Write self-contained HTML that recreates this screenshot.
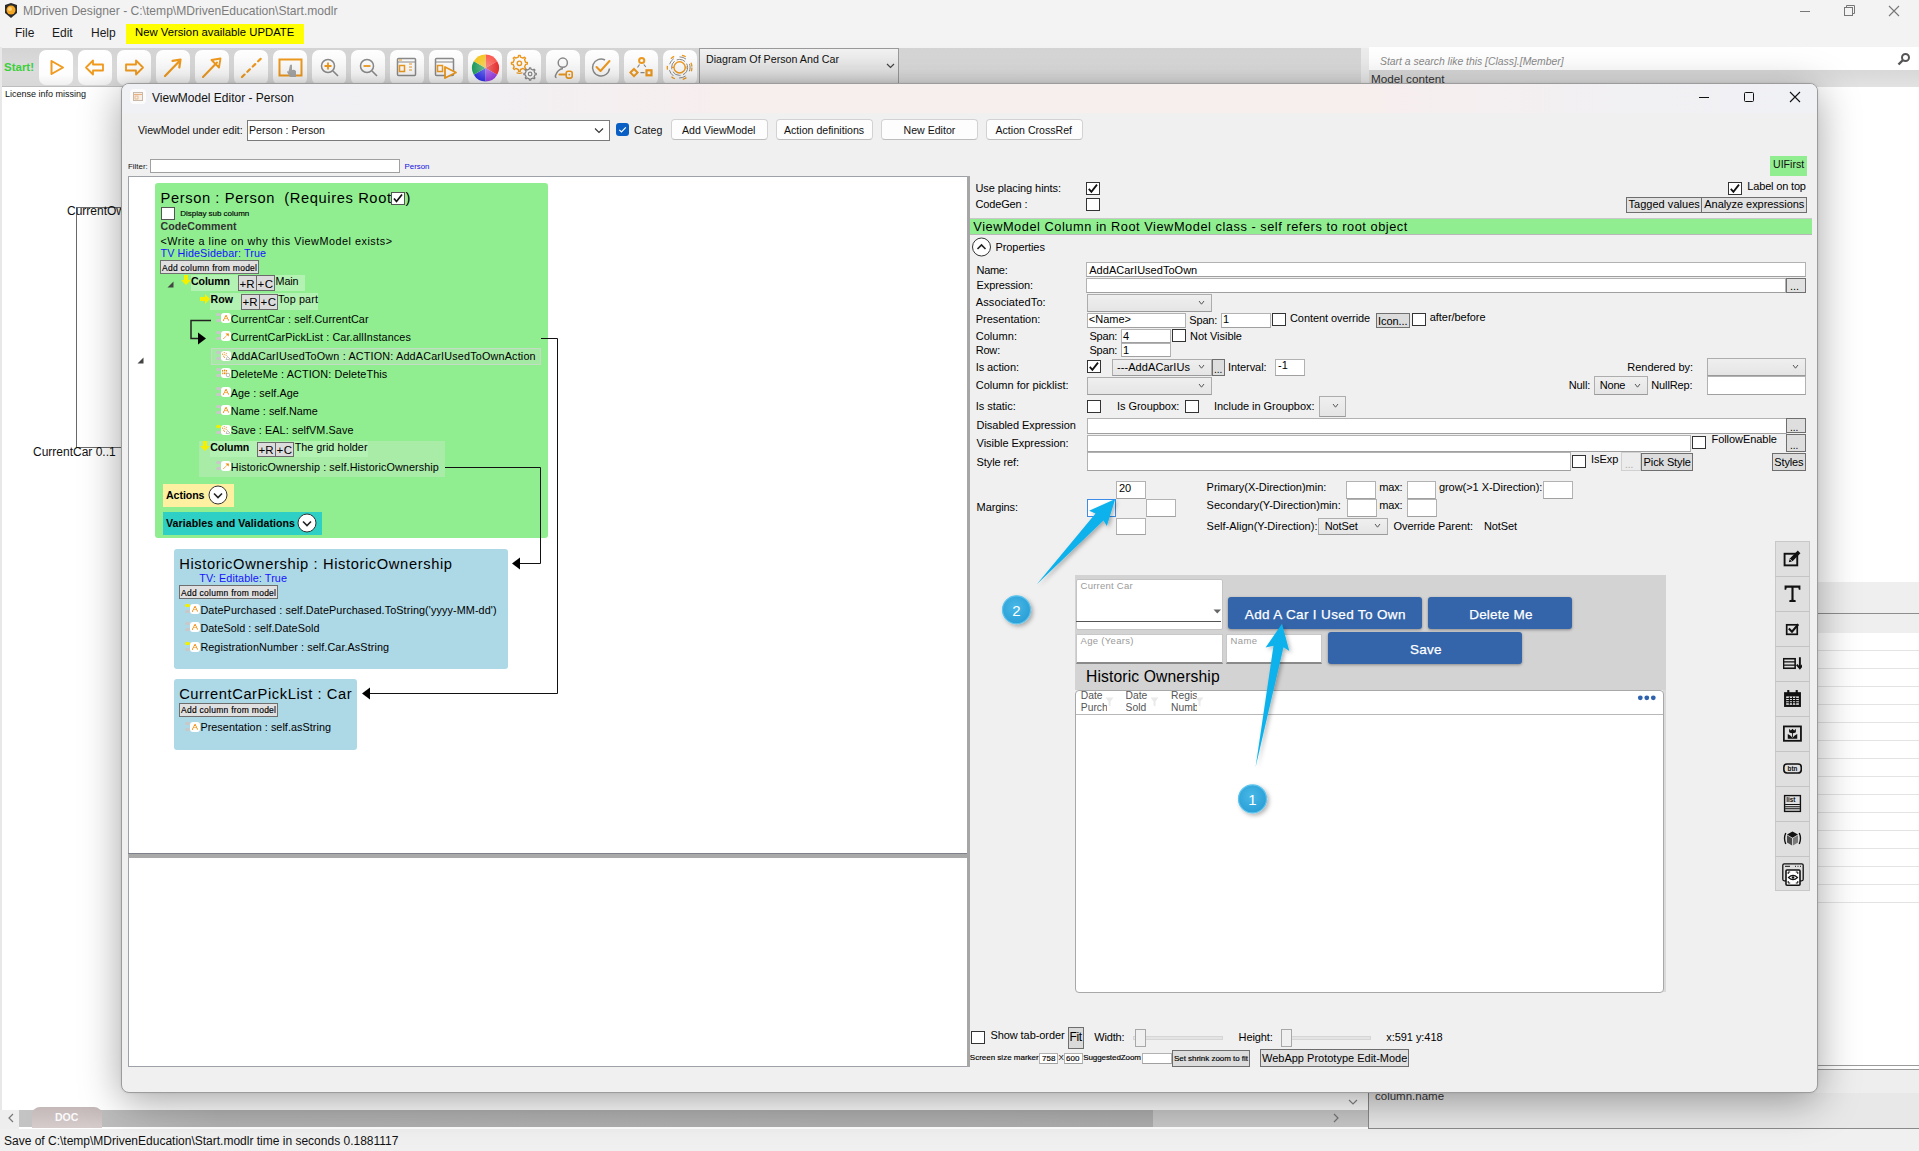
<!DOCTYPE html>
<html><head><meta charset="utf-8">
<style>
*{box-sizing:border-box;margin:0;padding:0}
html,body{width:1919px;height:1151px;overflow:hidden;background:#fff;font-family:"Liberation Sans",sans-serif;color:#000}
.a{position:absolute}
.t{position:absolute;white-space:pre;line-height:1}
.inp{position:absolute;background:#fff;border:1px solid #a9a9a9}
.btn{position:absolute;background:#e1e1e1;border:1px solid #7a7a7a}
.cb{position:absolute;width:13px;height:13px;background:#fff;border:1px solid #333}
</style></head><body>
<!-- title bar -->
<div class="a" style="left:0;top:0;width:1919px;height:48px;background:#f3f3f3"></div>
<svg class="a" style="left:3px;top:2px" width="16" height="17" viewBox="0 0 16 17"><path d="M2 3 L8 1 L14 3 L14 11 L8 16 L2 11 Z" fill="#2a2a2a"/><circle cx="8" cy="8" r="4.5" fill="#f5a623"/><circle cx="7" cy="7" r="2" fill="#ffd27a"/></svg>
<div class="t" style="left:23px;top:5px;font-size:12.1px;color:#7c7c7c">MDriven Designer - C:\temp\MDrivenEducation\Start.modlr</div>
<svg class="a" style="left:1799px;top:4px" width="110" height="14"><path d="M1 7.5h10" stroke="#777" stroke-width="1"/><rect x="45.5" y="3.5" width="8" height="8" fill="none" stroke="#777"/><path d="M47.5 3.5v-2h8v8h-2" fill="none" stroke="#777"/><path d="M90 2l10 10M100 2l-10 10" stroke="#777" stroke-width="1.1"/></svg>
<!-- menu -->
<div class="t" style="left:15px;top:27px;font-size:12px;color:#1a1a1a">File</div>
<div class="t" style="left:52px;top:27px;font-size:12px;color:#1a1a1a">Edit</div>
<div class="t" style="left:91px;top:27px;font-size:12px;color:#1a1a1a">Help</div>
<div class="a" style="left:126px;top:24px;width:178px;height:20px;background:#ffff00"></div>
<div class="t" style="left:135px;top:27px;font-size:11.3px">New Version available UPDATE</div>
<!-- toolbar -->
<div class="a" style="left:2px;top:48px;width:1359px;height:39px;background:linear-gradient(#d4d4d4,#dcdcdc 60%,#d8d8d8);border-bottom:1px solid #bdbdbd"></div>
<div class="t" style="left:4px;top:62px;font-size:11.5px;font-weight:bold;color:#3ccf3c">Start!</div>

<div class="a" style="left:39px;top:50px;width:34px;height:35px;border-radius:7px;background:linear-gradient(#ffffff,#fdfdfd 70%,#f0f0f0)"></div>
<svg class="a" style="left:39px;top:50px" width="34" height="35" viewBox="0 0 34 35"><path d="M12.5 11 L24 17.5 L12.5 24 Z" fill="none" stroke="#f09a1e" stroke-width="2" stroke-linejoin="round"/></svg>
<div class="a" style="left:78px;top:50px;width:34px;height:35px;border-radius:7px;background:linear-gradient(#ffffff,#fdfdfd 70%,#f0f0f0)"></div>
<svg class="a" style="left:78px;top:50px" width="34" height="35" viewBox="0 0 34 35"><path d="M8 17.5 L15 10.5 L15 14.5 L25 14.5 L25 20.5 L15 20.5 L15 24.5 Z" fill="none" stroke="#f09a1e" stroke-width="1.8" stroke-linejoin="round"/></svg>
<div class="a" style="left:117px;top:50px;width:34px;height:35px;border-radius:7px;background:linear-gradient(#ffffff,#fdfdfd 70%,#f0f0f0)"></div>
<svg class="a" style="left:117px;top:50px" width="34" height="35" viewBox="0 0 34 35"><path d="M26 17.5 L19 10.5 L19 14.5 L9 14.5 L9 20.5 L19 20.5 L19 24.5 Z" fill="none" stroke="#f09a1e" stroke-width="1.8" stroke-linejoin="round"/></svg>
<div class="a" style="left:156px;top:50px;width:34px;height:35px;border-radius:7px;background:linear-gradient(#ffffff,#fdfdfd 70%,#f0f0f0)"></div>
<svg class="a" style="left:156px;top:50px" width="34" height="35" viewBox="0 0 34 35"><path d="M9 26 L24 10.5 M16.5 10.8 L24.5 9.5 L23.3 17.5" fill="none" stroke="#f09a1e" stroke-width="2.2" stroke-linecap="round" stroke-linejoin="round"/></svg>
<div class="a" style="left:195px;top:50px;width:34px;height:35px;border-radius:7px;background:linear-gradient(#ffffff,#fdfdfd 70%,#f0f0f0)"></div>
<svg class="a" style="left:195px;top:50px" width="34" height="35" viewBox="0 0 34 35"><path d="M8 27 L22 12.5" stroke="#f09a1e" stroke-width="2" stroke-linecap="round"/><path d="M16.5 10 L25.5 8.5 L24 17.5 Z" fill="none" stroke="#f09a1e" stroke-width="1.8" stroke-linejoin="round"/></svg>
<div class="a" style="left:234px;top:50px;width:34px;height:35px;border-radius:7px;background:linear-gradient(#ffffff,#fdfdfd 70%,#f0f0f0)"></div>
<svg class="a" style="left:234px;top:50px" width="34" height="35" viewBox="0 0 34 35"><path d="M8 27 L27 8.5" stroke="#f09a1e" stroke-width="2.2" stroke-linecap="round" stroke-dasharray="3.5 4"/></svg>
<div class="a" style="left:273px;top:50px;width:34px;height:35px;border-radius:7px;background:linear-gradient(#ffffff,#fdfdfd 70%,#f0f0f0)"></div>
<svg class="a" style="left:273px;top:50px" width="34" height="35" viewBox="0 0 34 35"><rect x="6.5" y="9.5" width="22" height="16" fill="none" stroke="#f09a1e" stroke-width="2"/><path d="M17 15 q1.5 -1 2 0 v5 q2 -1 4 1 v6 h-6 l-3 -5 q0 -1 1.5 -0.5 z" fill="#a8a8a8"/></svg>
<div class="a" style="left:312px;top:50px;width:34px;height:35px;border-radius:7px;background:linear-gradient(#ffffff,#fdfdfd 70%,#f0f0f0)"></div>
<svg class="a" style="left:312px;top:50px" width="34" height="35" viewBox="0 0 34 35"><circle cx="16" cy="16" r="6.5" fill="none" stroke="#8c8c8c" stroke-width="1.5"/><path d="M21 21 L26 26" stroke="#8c8c8c" stroke-width="1.6"/><path d="M16 12.5v7M12.5 16h7" stroke="#f09a1e" stroke-width="1.8"/></svg>
<div class="a" style="left:351px;top:50px;width:34px;height:35px;border-radius:7px;background:linear-gradient(#ffffff,#fdfdfd 70%,#f0f0f0)"></div>
<svg class="a" style="left:351px;top:50px" width="34" height="35" viewBox="0 0 34 35"><circle cx="16" cy="16" r="6.5" fill="none" stroke="#8c8c8c" stroke-width="1.5"/><path d="M21 21 L26 26" stroke="#8c8c8c" stroke-width="1.6"/><path d="M12.5 16h7" stroke="#f09a1e" stroke-width="1.8"/></svg>
<div class="a" style="left:390px;top:50px;width:34px;height:35px;border-radius:7px;background:linear-gradient(#ffffff,#fdfdfd 70%,#f0f0f0)"></div>
<svg class="a" style="left:390px;top:50px" width="34" height="35" viewBox="0 0 34 35"><rect x="7.5" y="8.5" width="18" height="17" rx="1" fill="none" stroke="#8c8c8c" stroke-width="1.5"/><path d="M7.5 12h18" stroke="#8c8c8c" stroke-width="1"/><path d="M9 10h3" stroke="#f09a1e"/><rect x="9.5" y="15.5" width="5" height="6" fill="none" stroke="#f09a1e" stroke-width="1.5"/><path d="M19 14h3M19 17h3M19 20h3" stroke="#f09a1e"/></svg>
<div class="a" style="left:429px;top:50px;width:34px;height:35px;border-radius:7px;background:linear-gradient(#ffffff,#fdfdfd 70%,#f0f0f0)"></div>
<svg class="a" style="left:429px;top:50px" width="34" height="35" viewBox="0 0 34 35"><rect x="6.5" y="8.5" width="18" height="17" rx="1" fill="none" stroke="#8c8c8c" stroke-width="1.5"/><path d="M6.5 12h18" stroke="#8c8c8c" stroke-width="1"/><rect x="8.5" y="15.5" width="5" height="6" fill="none" stroke="#f09a1e" stroke-width="1.5"/><path d="M16 17 L27 22.5 L16 28 Z" fill="#fff" stroke="#f09a1e" stroke-width="1.8" stroke-linejoin="round"/></svg>
<div class="a" style="left:468px;top:50px;width:34px;height:35px;border-radius:7px;background:linear-gradient(#ffffff,#fdfdfd 70%,#f0f0f0)"></div>
<svg class="a" style="left:468px;top:50px" width="34" height="35" viewBox="0 0 34 35"><defs><radialGradient id="wg"><stop offset="0" stop-color="#fff" stop-opacity=".35"/><stop offset="1" stop-color="#fff" stop-opacity="0"/></radialGradient></defs>
<g transform="translate(17.5 18)">
<path d="M0 0 L0 -13.5 A13.5 13.5 0 0 1 11.7 -6.75 Z" fill="#ff5a50"/>
<path d="M0 0 L11.7 -6.75 A13.5 13.5 0 0 1 11.7 6.75 Z" fill="#f03030"/>
<path d="M0 0 L11.7 6.75 A13.5 13.5 0 0 1 0 13.5 Z" fill="#9a3ee8"/>
<path d="M0 0 L0 13.5 A13.5 13.5 0 0 1 -11.7 6.75 Z" fill="#3030f0"/>
<path d="M0 0 L-11.7 6.75 A13.5 13.5 0 0 1 -11.7 -6.75 Z" fill="#20a060"/>
<path d="M0 0 L-11.7 -6.75 A13.5 13.5 0 0 1 0 -13.5 Z" fill="#f8c820"/>
<circle r="13.5" fill="url(#wg)"/></g></svg>
<div class="a" style="left:507px;top:50px;width:34px;height:35px;border-radius:7px;background:linear-gradient(#ffffff,#fdfdfd 70%,#f0f0f0)"></div>
<svg class="a" style="left:507px;top:50px" width="34" height="35" viewBox="0 0 34 35"><path d="M18.60 12.19 L20.36 12.52 L20.36 14.08 L18.60 14.41 L17.57 16.90 L18.58 18.38 L17.48 19.48 L16.00 18.47 L13.51 19.50 L13.18 21.26 L11.62 21.26 L11.29 19.50 L8.80 18.47 L7.32 19.48 L6.22 18.38 L7.23 16.90 L6.20 14.41 L4.44 14.08 L4.44 12.52 L6.20 12.19 L7.23 9.70 L6.22 8.22 L7.32 7.12 L8.80 8.13 L11.29 7.10 L11.62 5.34 L13.18 5.34 L13.51 7.10 L16.00 8.13 L17.48 7.12 L18.58 8.22 L17.57 9.70Z" fill="none" stroke="#f09a1e" stroke-width="1.4" stroke-linejoin="round"/><circle cx="12.4" cy="13.3" r="2.2" fill="none" stroke="#f09a1e" stroke-width="1.4"/><path d="M9.5 22.8q3 1 6 0" stroke="#f09a1e" fill="none" stroke-width="1.2"/><path d="M27.92 23.14 L29.27 23.39 L29.27 24.61 L27.92 24.86 L27.12 26.80 L27.89 27.93 L27.03 28.79 L25.90 28.02 L23.96 28.82 L23.71 30.17 L22.49 30.17 L22.24 28.82 L20.30 28.02 L19.17 28.79 L18.31 27.93 L19.08 26.80 L18.28 24.86 L16.93 24.61 L16.93 23.39 L18.28 23.14 L19.08 21.20 L18.31 20.07 L19.17 19.21 L20.30 19.98 L22.24 19.18 L22.49 17.83 L23.71 17.83 L23.96 19.18 L25.90 19.98 L27.03 19.21 L27.89 20.07 L27.12 21.20Z" fill="#fff" stroke="#8c8c8c" stroke-width="1.3" stroke-linejoin="round"/><circle cx="23.1" cy="24" r="1.8" fill="none" stroke="#8c8c8c" stroke-width="1.2"/></svg>
<div class="a" style="left:546px;top:50px;width:34px;height:35px;border-radius:7px;background:linear-gradient(#ffffff,#fdfdfd 70%,#f0f0f0)"></div>
<svg class="a" style="left:546px;top:50px" width="34" height="35" viewBox="0 0 34 35"><circle cx="16.8" cy="12.7" r="4.6" fill="none" stroke="#8c8c8c" stroke-width="1.5"/><path d="M10.5 27.5 q-1.5 0 -1 -2 q2 -6 7.5 -7" fill="none" stroke="#8c8c8c" stroke-width="1.5"/><path d="M13.5 24.5h6.5" stroke="#f09a1e" stroke-width="2.2" stroke-linecap="round"/><rect x="20.2" y="21.3" width="6" height="6.8" rx="2" fill="none" stroke="#f09a1e" stroke-width="1.6"/><circle cx="23.3" cy="24.6" r=".9" fill="#f09a1e"/></svg>
<div class="a" style="left:585px;top:50px;width:34px;height:35px;border-radius:7px;background:linear-gradient(#ffffff,#fdfdfd 70%,#f0f0f0)"></div>
<svg class="a" style="left:585px;top:50px" width="34" height="35" viewBox="0 0 34 35"><path d="M24.5 18.5 A8.5 8.5 0 1 1 20 10" fill="none" stroke="#8c8c8c" stroke-width="1.5"/><path d="M11.5 17 L15.5 21 L24.5 11" fill="none" stroke="#f09a1e" stroke-width="2" stroke-linejoin="round" stroke-linecap="round"/></svg>
<div class="a" style="left:624px;top:50px;width:34px;height:35px;border-radius:7px;background:linear-gradient(#ffffff,#fdfdfd 70%,#f0f0f0)"></div>
<svg class="a" style="left:624px;top:50px" width="34" height="35" viewBox="0 0 34 35"><circle cx="17.7" cy="10.5" r="2.6" fill="none" stroke="#f09a1e" stroke-width="2"/><path d="M10 19L13.6 22.6L10 26.2L6.4 22.6Z" fill="none" stroke="#f09a1e" stroke-width="2"/><rect x="22.5" y="20.3" width="5" height="5" fill="none" stroke="#f09a1e" stroke-width="2.2"/><path d="M15.5 14.5l-2 3M19.8 14.5l2 2.5M16.5 22.7h4" stroke="#8c8c8c" stroke-width="1.2"/></svg>
<div class="a" style="left:663px;top:50px;width:34px;height:35px;border-radius:7px;background:linear-gradient(#ffffff,#fdfdfd 70%,#f0f0f0)"></div>
<svg class="a" style="left:663px;top:50px" width="34" height="35" viewBox="0 0 34 35"><circle cx="16.6" cy="17.4" r="5.6" fill="none" stroke="#f09a1e" stroke-width="1.4"/><circle cx="16.6" cy="17.4" r="8" fill="none" stroke="#8c8c8c" stroke-width="1" stroke-dasharray="9 2.5"/><circle cx="16.6" cy="17.4" r="10.5" fill="none" stroke="#8c8c8c" stroke-width="1" stroke-dasharray="7 6" stroke-dashoffset="3"/><circle cx="16.6" cy="17.4" r="12.3" fill="none" stroke="#f09a1e" stroke-width="1.3" stroke-dasharray="4 8"/><path d="M11 17.4h-2M23 16.2v2.5" stroke="#f09a1e" stroke-width="1.2"/></svg>
<!-- combo -->
<div class="a" style="left:699px;top:48px;width:200px;height:36px;border:1px solid #9a9a9a;background:linear-gradient(#f2f2f2,#e4e4e4 70%,#d4d4d4)"></div>
<div class="t" style="left:706px;top:54px;font-size:10.7px;color:#111">Diagram Of Person And Car</div>
<svg class="a" style="left:886px;top:63px" width="9" height="6"><path d="M1 1l3.5 3.5L8 1" fill="none" stroke="#444" stroke-width="1.2"/></svg>
<!-- right toolbar area -->
<div class="a" style="left:1361px;top:48px;width:8px;height:39px;background:#ececec"></div>
<div class="a" style="left:1369px;top:47px;width:550px;height:23px;background:#fff"></div>
<div class="t" style="left:1380px;top:57px;font-size:10.4px;font-style:italic;color:#8a8a8a">Start a search like this [Class].[Member]</div>
<svg class="a" style="left:1897px;top:52px" width="14" height="14"><circle cx="8.5" cy="5.5" r="3.5" fill="none" stroke="#555" stroke-width="2"/><path d="M6 8l-4.5 4.5" stroke="#555" stroke-width="2.4"/></svg>
<div class="a" style="left:1369px;top:70px;width:550px;height:17px;background:linear-gradient(#d8d8d8,#e2e2e2)"></div>
<div class="t" style="left:1371px;top:73px;font-size:11.7px;color:#333">Model content</div>
<!-- left canvas -->
<div class="a" style="left:2px;top:87px;width:1366px;height:1023px;background:#fff"></div>
<div class="a" style="left:0;top:47px;width:2px;height:1063px;background:#e8e8e8"></div>
<div class="t" style="left:5px;top:90px;font-size:9px;color:#111">License info missing</div>
<div class="a" style="left:76px;top:207px;width:60px;height:241px;border:1px solid #6a6a6a"></div>
<div class="t" style="left:67px;top:205px;font-size:12px;color:#111">CurrentOw</div>
<div class="t" style="left:33px;top:446px;font-size:12px;color:#111">CurrentCar 0..1</div>
<!-- right list area -->
<div class="a" style="left:1368px;top:87px;width:551px;height:1006px;background:#fff"></div>
<div class="a" style="left:1368px;top:582px;width:551px;height:31px;background:#efefef"></div>
<div class="a" style="left:1368px;top:613px;width:551px;height:1px;background:#8e8e8e"></div>
<div class="a" style="left:1368px;top:614px;width:551px;height:19px;background:#efefef"></div>
<div class="a" style="left:1368px;top:633px;width:551px;height:270px;background:linear-gradient(#fff 17px,#e4e4e4 17px);background-size:100% 18px"></div>
<div class="a" style="left:1368px;top:1065px;width:551px;height:1px;background:#9a9a9a"></div>
<div class="a" style="left:1368px;top:1069px;width:551px;height:1px;background:#9a9a9a"></div>
<div class="a" style="left:1368px;top:1070px;width:551px;height:59px;background:#eeeeee"></div>
<div class="a" style="left:1368px;top:1093px;width:551px;height:36px;border-left:1px solid #8a8a8a;border-bottom:1px solid #8a8a8a;background:#e8e8e8"></div>
<div class="t" style="left:1375px;top:1091px;font-size:11.5px;color:#333">column.name</div>
<!-- bottom tab bar -->

<div class="a" style="left:19px;top:1110px;width:1349px;height:17px;background:#c8c8c8"></div>
<div class="a" style="left:19px;top:1110px;width:1134px;height:17px;background:linear-gradient(90deg,#c4c4c4 0,#c0c0c0 60px,#b2b2b2 200px,#aeaeae 1134px)"></div>
<div class="a" style="left:0;top:1110px;width:19px;height:19px;background:#eeeeee"></div>
<svg class="a" style="left:7px;top:1113px" width="8" height="10"><path d="M6 1L2 5l4 4" fill="none" stroke="#777" stroke-width="1.2"/></svg>
<svg class="a" style="left:1332px;top:1113px" width="8" height="10"><path d="M2 1l4 4-4 4" fill="none" stroke="#777" stroke-width="1.2"/></svg>
<svg class="a" style="left:1348px;top:1098px" width="10" height="8"><path d="M1 2l4 4 4-4" fill="none" stroke="#888" stroke-width="1.2"/></svg>
<div class="a" style="left:32px;top:1107px;width:70px;height:21px;border-radius:8px 8px 0 0;background:linear-gradient(#c4b8b8,#d6cccc)"></div>
<div class="t" style="left:55px;top:1112px;font-size:10.5px;font-weight:bold;color:#fafafa">DOC</div>
<!-- status -->
<div class="a" style="left:0;top:1129px;width:1919px;height:22px;background:#f0f0f0"></div>
<div class="t" style="left:4px;top:1135px;font-size:12px;color:#111">Save of C:\temp\MDrivenEducation\Start.modlr time in seconds 0.1881117</div>

<!-- dialog -->
<div class="a" style="left:121px;top:83px;width:1697px;height:1010px;background:#f0f0f0;border:1px solid #9c9c9c;border-radius:8px;box-shadow:0 8px 40px rgba(0,0,0,.36),0 0 3px rgba(0,0,0,.08)"></div>
<div class="a" style="left:122px;top:84px;width:1695px;height:29px;border-radius:7px 7px 0 0;background:linear-gradient(90deg,#f0f1f5 0,#f1f0f3 350px,#f7eeee 600px,#f7eeee 1250px,#f1f0f3 1500px,#f0f1f5 1695px)"></div>
<div class="a" style="left:130px;top:89px;width:16px;height:15px;border-radius:4px;background:#fbfbfb"></div>
<svg class="a" style="left:133px;top:92px" width="10" height="9"><rect x=".5" y=".5" width="9" height="8" fill="#f6efe6" stroke="#c9b9a8"/><path d="M1 2.5h8" stroke="#e8b080"/><rect x="2" y="4" width="3" height="3" fill="none" stroke="#e8b080" stroke-width=".8"/></svg>
<div class="t" style="left:152px;top:92px;font-size:12px;color:#111">ViewModel Editor - Person</div>
<svg class="a" style="left:1697px;top:90px" width="110" height="14"><path d="M2 7.5h10" stroke="#111" stroke-width="1"/><rect x="47.5" y="2.5" width="9" height="9" rx="1" fill="none" stroke="#111"/><path d="M93 2l10 10M103 2l-10 10" stroke="#111" stroke-width="1.1"/></svg>
<!-- top controls -->
<div class="t" style="left:138px;top:124.5px;font-size:10.6px;color:#111">ViewModel under edit:</div>
<div class="a" style="left:247px;top:120px;width:363px;height:21px;background:#fff;border:1px solid #7a7a7a"></div>
<div class="t" style="left:249px;top:125px;font-size:10.6px;color:#111">Person : Person</div>
<svg class="a" style="left:594px;top:127px" width="10" height="7"><path d="M1 1.5l4 4 4-4" fill="none" stroke="#333" stroke-width="1.1"/></svg>
<div class="a" style="left:616px;top:123px;width:13px;height:13px;border-radius:3px;background:#0a5fc4"></div>
<svg class="a" style="left:616px;top:123px" width="13" height="13"><path d="M3.3 6.8l2.2 2.2 4.3-4.6" fill="none" stroke="#fff" stroke-width="1.2"/></svg>
<div class="t" style="left:634px;top:124.8px;font-size:10.6px;color:#111">Categ</div>
<div class="a" style="left:671px;top:119px;width:97px;height:21px;border-radius:4px;background:#fdfdfd;border:1px solid #d2d2d2;border-bottom-color:#bdbdbd"></div>
<div class="t" style="left:682px;top:124.6px;font-size:10.6px;color:#111">Add ViewModel</div>
<div class="a" style="left:776px;top:119px;width:97px;height:21px;border-radius:4px;background:#fdfdfd;border:1px solid #d2d2d2;border-bottom-color:#bdbdbd"></div>
<div class="t" style="left:784px;top:124.6px;font-size:10.6px;color:#111">Action definitions</div>
<div class="a" style="left:881px;top:119px;width:97px;height:21px;border-radius:4px;background:#fdfdfd;border:1px solid #d2d2d2;border-bottom-color:#bdbdbd"></div>
<div class="t" style="left:903.5px;top:124.6px;font-size:10.6px;color:#111">New Editor</div>
<div class="a" style="left:986px;top:119px;width:97px;height:21px;border-radius:4px;background:#fdfdfd;border:1px solid #d2d2d2;border-bottom-color:#bdbdbd"></div>
<div class="t" style="left:995.5px;top:124.6px;font-size:10.6px;color:#111">Action CrossRef</div>
<!-- filter -->
<div class="t" style="left:128px;top:162.5px;font-size:7.9px;color:#111">Filter:</div>
<div class="a" style="left:150px;top:159px;width:250px;height:14px;background:#fff;border:1px solid #a0a0a0"></div>
<div class="t" style="left:404.5px;top:162.5px;font-size:7.9px;color:#1010e0">Person</div>
<!-- tree panel frame -->
<div class="a" style="left:128px;top:176px;width:840px;height:678px;background:#fff;border:1px solid #9ea2a8;border-right:none;border-bottom:none"></div>
<div class="a" style="left:128px;top:853px;width:839px;height:1px;background:#7c8088"></div>
<div class="a" style="left:128px;top:854px;width:839px;height:4px;background:#a9a9a9"></div>
<div class="a" style="left:128px;top:858px;width:839px;height:209px;background:#fff;border-left:1px solid #9ea2a8;border-bottom:1px solid #9ea2a8"></div>
<div class="a" style="left:967px;top:176px;width:3px;height:891px;background:#a6a6a6"></div>
<!-- UIFirst -->
<div class="a" style="left:1770px;top:156px;width:37px;height:20px;background:#90ee90"></div>
<div class="t" style="left:1773px;top:159px;font-size:10.6px;color:#111">UIFirst</div>

<div class="a" style="left:155px;top:183px;width:393px;height:355px;background:#90ee90;border-radius:3px"></div>
<div class="t" style="left:160.5px;top:191px;font-size:14.7px;color:#000;letter-spacing:0.608px;">Person : Person  (Requires Root</div>
<div class="a" style="left:391px;top:192px;width:14px;height:13px;background:#fff;border:1px solid #555"></div>
<svg class="a" style="left:391px;top:192px" width="14" height="13"><path d="M3 6.5l2.5 3 5.5-7" fill="none" stroke="#111" stroke-width="1.7"/></svg>
<div class="t" style="left:405.5px;top:191px;font-size:14.7px;color:#000;">)</div>
<div class="a" style="left:161px;top:207px;width:14px;height:13px;background:#fff;border:1px solid #555"></div>
<div class="t" style="left:180.3px;top:210px;font-size:8px;color:#000;letter-spacing:-0.022px;-webkit-text-stroke:.15px #000;">Display sub column</div>
<div class="t" style="left:160.5px;top:221px;font-size:10.6px;font-weight:bold;color:#333;letter-spacing:0.066px;">CodeComment</div>
<div class="t" style="left:160.5px;top:236px;font-size:10.8px;color:#000;letter-spacing:0.520px;">&lt;Write a line on why this ViewModel exists&gt;</div>
<div class="t" style="left:160.5px;top:248px;font-size:10.8px;color:#1414ff;letter-spacing:0.088px;">TV HideSidebar: True</div>
<div class="a" style="left:160px;top:260px;width:99px;height:14px;background:#e0e0e0;border:1px solid #6e6e6e"></div>
<div class="t" style="left:162px;top:264px;font-size:8.5px;color:#000;letter-spacing:0.262px;-webkit-text-stroke:.15px #000;">Add column from model</div>
<svg class="a" style="left:167px;top:281px" width="7" height="7"><path d="M6.5 0.5V6.5H0.5Z" fill="#444"/></svg>
<svg class="a" style="left:137px;top:357px" width="7" height="7"><path d="M6.5 0.5V6.5H0.5Z" fill="#444"/></svg>
<div class="a" style="left:191px;top:275px;width:114px;height:16px;background:#b4f2b4"></div>
<svg class="a" style="left:181px;top:275px" width="10" height="10"><path d="M3 0h4v5h3l-5 5-5-5h3z" fill="#f5f000"/></svg>
<div class="t" style="left:191px;top:276px;font-size:10.6px;font-weight:bold;color:#000;letter-spacing:-0.087px;">Column</div>
<div class="a" style="left:238px;top:275px;width:19px;height:16px;background:#dcdcdc;border:1px solid #6a6a6a"></div>
<div class="a" style="left:256px;top:275px;width:19px;height:16px;background:#dcdcdc;border:1px solid #6a6a6a"></div>
<div class="t" style="left:239.5px;top:279px;font-size:11.5px;color:#000;letter-spacing:-0.031px;">+R</div>
<div class="t" style="left:257.5px;top:279px;font-size:11.5px;color:#000;letter-spacing:0.469px;">+C</div>
<div class="t" style="left:275.6px;top:276px;font-size:10.8px;color:#000;letter-spacing:-0.135px;">Main</div>
<div class="a" style="left:210px;top:293px;width:108px;height:17px;background:#b4f2b4"></div>
<svg class="a" style="left:200px;top:294px" width="10" height="10"><path d="M0 3h5V0l5 5-5 5V7H0z" fill="#f5f000"/></svg>
<div class="t" style="left:210.6px;top:294px;font-size:10.6px;font-weight:bold;color:#000;letter-spacing:0.062px;">Row</div>
<div class="a" style="left:241px;top:293.5px;width:19px;height:16px;background:#dcdcdc;border:1px solid #6a6a6a"></div>
<div class="a" style="left:259px;top:293.5px;width:19px;height:16px;background:#dcdcdc;border:1px solid #6a6a6a"></div>
<div class="t" style="left:242.5px;top:297px;font-size:11.5px;color:#000;letter-spacing:-0.031px;">+R</div>
<div class="t" style="left:260.5px;top:297px;font-size:11.5px;color:#000;letter-spacing:0.469px;">+C</div>
<div class="t" style="left:278px;top:294px;font-size:10.8px;color:#000;letter-spacing:0.141px;">Top part</div>
<div class="a" style="left:211px;top:348px;width:330px;height:17px;background:#a4eaa4;border:1px solid #c4dcc4"></div>
<div class="a" style="left:216px;top:312.9px;width:5px;height:3px;border-radius:2px;background:#c8c8c8"></div>
<div class="a" style="left:216px;top:318.9px;width:5px;height:3px;border-radius:2px;background:#c8c8c8"></div>
<div class="a" style="left:221px;top:312.9px;width:10px;height:10px;border-radius:3px;background:#fff"></div>
<svg class="a" style="left:221px;top:312.9px" width="10" height="10"><path d="M2.3 7.7L5 2.2L7.7 7.7" fill="none" stroke="#f08a00" stroke-width="1.05" stroke-dasharray="1.6 .5"/><path d="M4.3 5.6h1.4" stroke="#f08a00" stroke-width=".8"/></svg>
<div class="t" style="left:230.8px;top:314px;font-size:10.8px;color:#000;letter-spacing:0.079px;">CurrentCar : self.CurrentCar</div>
<div class="a" style="left:216px;top:331.0px;width:5px;height:3px;border-radius:2px;background:#c8c8c8"></div>
<div class="a" style="left:216px;top:337.0px;width:5px;height:3px;border-radius:2px;background:#c8c8c8"></div>
<div class="a" style="left:221px;top:331.0px;width:10px;height:10px;border-radius:3px;background:#fff"></div>
<svg class="a" style="left:221px;top:331.0px" width="10" height="10"><path d="M2.2 8L6.5 3.7" stroke="#f08a00" stroke-width=".9" stroke-dasharray="1.2 .5"/><path d="M4.5 2.6L7.9 2.4L7.6 5.6Z" fill="#f08a00"/></svg>
<div class="t" style="left:230.8px;top:332px;font-size:10.8px;color:#000;letter-spacing:0.099px;">CurrentCarPickList : Car.allInstances</div>
<div class="a" style="left:216px;top:350.6px;width:5px;height:3px;border-radius:2px;background:#c8c8c8"></div>
<div class="a" style="left:216px;top:356.6px;width:5px;height:3px;border-radius:2px;background:#c8c8c8"></div>
<div class="a" style="left:221px;top:350.6px;width:10px;height:10px;border-radius:3px;background:#fff"></div>
<svg class="a" style="left:221px;top:350.6px" width="10" height="10"><g fill="#f08a00"><circle cx="3.2" cy="1.6" r=".55"/><circle cx="5.3" cy="2.2" r=".55"/><circle cx="1.6" cy="3.2" r=".6"/><circle cx="3.8" cy="3.5" r=".5"/><circle cx="5.2" cy="4.2" r=".55"/><circle cx="2.8" cy="5.2" r=".6"/><circle cx="3.4" cy="6.6" r=".5"/></g><path d="M5 8.5l1.5-3 2.5 2.5-2 .5z" fill="none" stroke="#999" stroke-width=".6"/></svg>
<div class="t" style="left:230.8px;top:351px;font-size:10.8px;color:#000;letter-spacing:0.179px;">AddACarIUsedToOwn : ACTION: AddACarIUsedToOwnAction</div>
<div class="a" style="left:216px;top:368.4px;width:5px;height:3px;border-radius:2px;background:#c8c8c8"></div>
<div class="a" style="left:216px;top:374.4px;width:5px;height:3px;border-radius:2px;background:#c8c8c8"></div>
<div class="a" style="left:221px;top:368.4px;width:10px;height:10px;border-radius:3px;background:#fff"></div>
<svg class="a" style="left:221px;top:368.4px" width="10" height="10"><g fill="#f08a00"><rect x="1" y="2" width="1.2" height="1.6"/><rect x="3" y="1.6" width="1.2" height="1.8"/><rect x="4.8" y="2" width="1.2" height="1.6"/><rect x="1.2" y="4.6" width="1.2" height="1.6"/><rect x="3" y="4.4" width="1.2" height="1.8"/><rect x="4.6" y="4.6" width="1.2" height="1.4"/></g><circle cx="7" cy="7" r="1.8" fill="none" stroke="#999" stroke-width=".7"/></svg>
<div class="t" style="left:230.8px;top:369px;font-size:10.8px;color:#000;letter-spacing:0.121px;">DeleteMe : ACTION: DeleteThis</div>
<div class="a" style="left:216px;top:387.4px;width:5px;height:3px;border-radius:2px;background:#c8c8c8"></div>
<div class="a" style="left:216px;top:393.4px;width:5px;height:3px;border-radius:2px;background:#c8c8c8"></div>
<div class="a" style="left:221px;top:387.4px;width:10px;height:10px;border-radius:3px;background:#fff"></div>
<svg class="a" style="left:221px;top:387.4px" width="10" height="10"><path d="M2.3 7.7L5 2.2L7.7 7.7" fill="none" stroke="#f08a00" stroke-width="1.05" stroke-dasharray="1.6 .5"/><path d="M4.3 5.6h1.4" stroke="#f08a00" stroke-width=".8"/></svg>
<div class="t" style="left:230.8px;top:388px;font-size:10.8px;color:#000;letter-spacing:0.059px;">Age : self.Age</div>
<div class="a" style="left:216px;top:405.4px;width:5px;height:3px;border-radius:2px;background:#c8c8c8"></div>
<div class="a" style="left:216px;top:411.4px;width:5px;height:3px;border-radius:2px;background:#c8c8c8"></div>
<div class="a" style="left:221px;top:405.4px;width:10px;height:10px;border-radius:3px;background:#fff"></div>
<svg class="a" style="left:221px;top:405.4px" width="10" height="10"><path d="M2.3 7.7L5 2.2L7.7 7.7" fill="none" stroke="#f08a00" stroke-width="1.05" stroke-dasharray="1.6 .5"/><path d="M4.3 5.6h1.4" stroke="#f08a00" stroke-width=".8"/></svg>
<div class="t" style="left:230.8px;top:406px;font-size:10.8px;color:#000;letter-spacing:0.040px;">Name : self.Name</div>
<div class="a" style="left:216px;top:424.5px;width:5px;height:3px;border-radius:2px;background:#f0f000"></div>
<div class="a" style="left:216px;top:430.5px;width:5px;height:3px;border-radius:2px;background:#c8c8c8"></div>
<div class="a" style="left:221px;top:424.5px;width:10px;height:10px;border-radius:3px;background:#fff"></div>
<svg class="a" style="left:221px;top:424.5px" width="10" height="10"><g fill="#f08a00"><circle cx="3.2" cy="1.6" r=".55"/><circle cx="5.3" cy="2.2" r=".55"/><circle cx="1.6" cy="3.2" r=".6"/><circle cx="3.8" cy="3.5" r=".5"/><circle cx="5.2" cy="4.2" r=".55"/><circle cx="2.8" cy="5.2" r=".6"/><circle cx="3.4" cy="6.6" r=".5"/></g><path d="M5 8.5l1.5-3 2.5 2.5-2 .5z" fill="none" stroke="#999" stroke-width=".6"/></svg>
<div class="t" style="left:230.8px;top:425px;font-size:10.8px;color:#000;letter-spacing:0.090px;">Save : EAL: selfVM.Save</div>
<div class="a" style="left:199px;top:441px;width:246px;height:36px;background:#a8eca8"></div>
<div class="a" style="left:210px;top:441px;width:158px;height:16px;background:#b4f2b4"></div>
<svg class="a" style="left:200px;top:441px" width="10" height="10"><path d="M3 0h4v5h3l-5 5-5-5h3z" fill="#f5f000"/></svg>
<div class="t" style="left:210.2px;top:442px;font-size:10.6px;font-weight:bold;color:#000;letter-spacing:-0.087px;">Column</div>
<div class="a" style="left:257px;top:441.5px;width:19px;height:15px;background:#dcdcdc;border:1px solid #6a6a6a"></div>
<div class="a" style="left:275px;top:441.5px;width:19px;height:15px;background:#dcdcdc;border:1px solid #6a6a6a"></div>
<div class="t" style="left:258.5px;top:445px;font-size:11.5px;color:#000;letter-spacing:-0.031px;">+R</div>
<div class="t" style="left:276.5px;top:445px;font-size:11.5px;color:#000;letter-spacing:0.469px;">+C</div>
<div class="t" style="left:294.7px;top:442px;font-size:10.8px;color:#000;letter-spacing:0.012px;">The grid holder</div>
<div class="a" style="left:216px;top:461px;width:5px;height:3px;border-radius:2px;background:#c8c8c8"></div>
<div class="a" style="left:216px;top:467px;width:5px;height:3px;border-radius:2px;background:#c8c8c8"></div>
<div class="a" style="left:221px;top:461px;width:10px;height:10px;border-radius:3px;background:#fff"></div>
<svg class="a" style="left:221px;top:461px" width="10" height="10"><path d="M2.2 8L6.5 3.7" stroke="#f08a00" stroke-width=".9" stroke-dasharray="1.2 .5"/><path d="M4.5 2.6L7.9 2.4L7.6 5.6Z" fill="#f08a00"/></svg>
<div class="t" style="left:230.8px;top:462px;font-size:10.8px;color:#000;letter-spacing:0.098px;">HistoricOwnership : self.HistoricOwnership</div>
<div class="a" style="left:163px;top:484px;width:71px;height:23px;background:#fdf0a0"></div>
<div class="t" style="left:166px;top:490px;font-size:10.6px;font-weight:bold;color:#000;letter-spacing:-0.060px;">Actions</div>
<svg class="a" style="left:208px;top:485px" width="20" height="20"><circle cx="10" cy="10" r="9" fill="#fff" stroke="#333" stroke-width="1"/><path d="M6 8.5l4 4 4-4" fill="none" stroke="#222" stroke-width="1.6"/></svg>
<div class="a" style="left:163px;top:512px;width:159px;height:23px;background:#2ecfc4"></div>
<div class="t" style="left:166px;top:518px;font-size:10.6px;font-weight:bold;color:#000;letter-spacing:0.076px;">Variables and Validations</div>
<svg class="a" style="left:297px;top:513px" width="20" height="20"><circle cx="10" cy="10" r="9" fill="#fff" stroke="#333" stroke-width="1"/><path d="M6 8.5l4 4 4-4" fill="none" stroke="#222" stroke-width="1.6"/></svg>
<div class="a" style="left:174px;top:549px;width:334px;height:120px;background:#add8e6;border-radius:3px"></div>
<div class="t" style="left:179.2px;top:557px;font-size:14.7px;color:#000;letter-spacing:0.617px;">HistoricOwnership : HistoricOwnership</div>
<div class="t" style="left:199.2px;top:573px;font-size:10.8px;color:#1414ff;letter-spacing:0.104px;">TV: Editable: True</div>
<div class="a" style="left:179px;top:585px;width:99px;height:14px;background:#e0e0e0;border:1px solid #6e6e6e"></div>
<div class="t" style="left:181px;top:589px;font-size:8.5px;color:#000;letter-spacing:0.262px;-webkit-text-stroke:.15px #000;">Add column from model</div>
<div class="a" style="left:185px;top:604.4px;width:5px;height:3px;border-radius:2px;background:#f0f000"></div>
<div class="a" style="left:185px;top:610.4px;width:5px;height:3px;border-radius:2px;background:#c8c8c8"></div>
<div class="a" style="left:190px;top:604.4px;width:10px;height:10px;border-radius:3px;background:#fff"></div>
<svg class="a" style="left:190px;top:604.4px" width="10" height="10"><path d="M2.3 7.7L5 2.2L7.7 7.7" fill="none" stroke="#f08a00" stroke-width="1.05" stroke-dasharray="1.6 .5"/><path d="M4.3 5.6h1.4" stroke="#f08a00" stroke-width=".8"/></svg>
<div class="t" style="left:200.4px;top:605px;font-size:10.8px;color:#000;letter-spacing:0.104px;">DatePurchased : self.DatePurchased.ToString('yyyy-MM-dd')</div>
<div class="a" style="left:185px;top:622.4px;width:5px;height:3px;border-radius:2px;background:#c8c8c8"></div>
<div class="a" style="left:185px;top:628.4px;width:5px;height:3px;border-radius:2px;background:#c8c8c8"></div>
<div class="a" style="left:190px;top:622.4px;width:10px;height:10px;border-radius:3px;background:#fff"></div>
<svg class="a" style="left:190px;top:622.4px" width="10" height="10"><path d="M2.3 7.7L5 2.2L7.7 7.7" fill="none" stroke="#f08a00" stroke-width="1.05" stroke-dasharray="1.6 .5"/><path d="M4.3 5.6h1.4" stroke="#f08a00" stroke-width=".8"/></svg>
<div class="t" style="left:200.4px;top:623px;font-size:10.8px;color:#000;letter-spacing:0.063px;">DateSold : self.DateSold</div>
<div class="a" style="left:185px;top:641.6px;width:5px;height:3px;border-radius:2px;background:#f0f000"></div>
<div class="a" style="left:185px;top:647.6px;width:5px;height:3px;border-radius:2px;background:#c8c8c8"></div>
<div class="a" style="left:190px;top:641.6px;width:10px;height:10px;border-radius:3px;background:#fff"></div>
<svg class="a" style="left:190px;top:641.6px" width="10" height="10"><path d="M2.3 7.7L5 2.2L7.7 7.7" fill="none" stroke="#f08a00" stroke-width="1.05" stroke-dasharray="1.6 .5"/><path d="M4.3 5.6h1.4" stroke="#f08a00" stroke-width=".8"/></svg>
<div class="t" style="left:200.4px;top:642px;font-size:10.8px;color:#000;letter-spacing:0.086px;">RegistrationNumber : self.Car.AsString</div>
<div class="a" style="left:174px;top:679px;width:183px;height:71px;background:#add8e6;border-radius:3px"></div>
<div class="t" style="left:179.2px;top:687px;font-size:14.7px;color:#000;letter-spacing:0.576px;">CurrentCarPickList : Car</div>
<div class="a" style="left:179px;top:702.5px;width:99px;height:14px;background:#e0e0e0;border:1px solid #6e6e6e"></div>
<div class="t" style="left:181px;top:706px;font-size:8.5px;color:#000;letter-spacing:0.262px;-webkit-text-stroke:.15px #000;">Add column from model</div>
<div class="a" style="left:185px;top:722px;width:5px;height:3px;border-radius:2px;background:#c8c8c8"></div>
<div class="a" style="left:185px;top:728px;width:5px;height:3px;border-radius:2px;background:#c8c8c8"></div>
<div class="a" style="left:190px;top:722px;width:10px;height:10px;border-radius:3px;background:#fff"></div>
<svg class="a" style="left:190px;top:722px" width="10" height="10"><path d="M2.3 7.7L5 2.2L7.7 7.7" fill="none" stroke="#f08a00" stroke-width="1.05" stroke-dasharray="1.6 .5"/><path d="M4.3 5.6h1.4" stroke="#f08a00" stroke-width=".8"/></svg>
<div class="t" style="left:200.4px;top:722px;font-size:10.8px;color:#000;letter-spacing:0.058px;">Presentation : self.asString</div>
<svg class="a" style="left:180px;top:310px" width="400" height="400">
<path d="M31 10.5H11V28.5H20" fill="none" stroke="#222" stroke-width="1.5"/>
<path d="M18 22.5L26 28.5L18 34.5Z" fill="#000"/>
<path d="M361 28.5H377.5V383.5H190" fill="none" stroke="#111" stroke-width="1"/>
<path d="M190 377.5L182 383.5L190 389.5Z" fill="#000"/>
<path d="M265 157.5H360.5V253.5H340" fill="none" stroke="#111" stroke-width="1"/>
<path d="M340 247.5L332 253.5L340 259.5Z" fill="#000"/>
</svg>
<div class="t" style="left:975.5px;top:183px;font-size:11px;color:#000;letter-spacing:-0.078px;">Use placing hints:</div>
<div class="a" style="left:1086px;top:182px;width:14px;height:13px;background:#fff;border:1px solid #333"></div>
<div class="a" style="left:1086px;top:182px;width:14px;height:13px;background:#fff;border:1px solid #333"></div>
<svg class="a" style="left:1086px;top:182px" width="14" height="14"><path d="M2.8 6.8l2.6 3 5.6-7.2" fill="none" stroke="#111" stroke-width="1.8"/></svg>
<div class="t" style="left:975.5px;top:199px;font-size:11px;color:#000;letter-spacing:-0.150px;">CodeGen :</div>
<div class="a" style="left:1086px;top:198px;width:14px;height:13px;background:#fff;border:1px solid #333"></div>
<div class="a" style="left:1728px;top:182px;width:14px;height:13px;background:#fff;border:1px solid #333"></div>
<svg class="a" style="left:1728px;top:182px" width="14" height="14"><path d="M2.8 6.8l2.6 3 5.6-7.2" fill="none" stroke="#111" stroke-width="1.8"/></svg>
<div class="t" style="left:1747.3px;top:181px;font-size:11px;color:#000;letter-spacing:-0.169px;">Label on top</div>
<div class="a" style="left:1626px;top:196.5px;width:76px;height:16.0px;background:#e1e1e1;border:1px solid #6e6e6e"></div>
<div class="a" style="left:1701px;top:196.5px;width:106px;height:16.0px;background:#e1e1e1;border:1px solid #6e6e6e"></div>
<div class="t" style="left:1628.5px;top:199px;font-size:11px;color:#000;letter-spacing:0.029px;">Tagged values</div>
<div class="t" style="left:1704.3px;top:199px;font-size:11px;color:#000;letter-spacing:-0.049px;">Analyze expressions</div>
<div class="a" style="left:970px;top:218px;width:842px;height:17px;background:#90ee90;border-top:1px solid #c8c8c8;border-bottom:1px solid #b8b8b8"></div>
<div class="t" style="left:973.3px;top:221px;font-size:12.8px;color:#000;letter-spacing:0.532px;">ViewModel Column in Root ViewModel class - self refers to root object</div>
<svg class="a" style="left:971px;top:237px" width="21" height="20"><circle cx="10.5" cy="10" r="9" fill="#fff" stroke="#333" stroke-width="1"/><path d="M6.5 12l4-4 4 4" fill="none" stroke="#222" stroke-width="1.6"/></svg>
<div class="t" style="left:995.5px;top:242px;font-size:11px;color:#000;letter-spacing:-0.082px;">Properties</div>
<div class="t" style="left:976.5px;top:265px;font-size:11px;color:#000;letter-spacing:-0.289px;">Name:</div>
<div class="a" style="left:1086px;top:262px;width:720px;height:15px;background:#fff;border:1px solid #b2b2b2;border-bottom-color:#a0a0a0;"></div>
<div class="t" style="left:1089.25px;top:265px;font-size:11px;color:#000;letter-spacing:0.024px;">AddACarIUsedToOwn</div>
<div class="t" style="left:976.5px;top:280px;font-size:11px;color:#000;letter-spacing:-0.098px;">Expression:</div>
<div class="a" style="left:1086px;top:277.5px;width:700px;height:15.5px;background:#fff;border:1px solid #b2b2b2;border-bottom-color:#a0a0a0;"></div>
<div class="a" style="left:1786px;top:277.5px;width:20px;height:15.5px;background:#e1e1e1;border:1px solid #707070"></div>
<div class="t" style="left:1790px;top:281px;font-size:11px;color:#000;">...</div>
<div class="t" style="left:975.7px;top:297px;font-size:11px;color:#000;letter-spacing:0.126px;">AssociatedTo:</div>
<div class="a" style="left:1086.5px;top:293.5px;width:125.5px;height:18.0px;background:linear-gradient(#efefef,#e5e5e5);border:1px solid #adadad;border-bottom-color:#9a9a9a"></div>
<svg class="a" style="left:1197px;top:299.5px" width="9" height="6"><path d="M2 1l2.5 3.2 2.5-3.2" fill="none" stroke="#555" stroke-width="1"/></svg>
<div class="t" style="left:975.7px;top:314px;font-size:11px;color:#000;letter-spacing:-0.011px;">Presentation:</div>
<div class="a" style="left:1086.5px;top:312.5px;width:99.0px;height:15.0px;background:#fff;border:1px solid #b2b2b2;border-bottom-color:#a0a0a0;"></div>
<div class="t" style="left:1088.8px;top:314px;font-size:11px;color:#000;">&lt;Name&gt;</div>
<div class="t" style="left:1189.3px;top:315px;font-size:11px;color:#000;letter-spacing:-0.188px;">Span:</div>
<div class="a" style="left:1221px;top:312.5px;width:49.5px;height:15.0px;background:#fff;border:1px solid #b2b2b2;border-bottom-color:#a0a0a0;"></div>
<div class="t" style="left:1223px;top:314px;font-size:11px;color:#000;">1</div>
<div class="a" style="left:1272px;top:313px;width:14px;height:13px;background:#fff;border:1px solid #333"></div>
<div class="t" style="left:1290px;top:313px;font-size:11px;color:#000;letter-spacing:-0.075px;">Content override</div>
<div class="a" style="left:1376px;top:313px;width:34px;height:14.5px;background:#dcdcdc;border:1px solid #707070"></div>
<div class="t" style="left:1378px;top:316px;font-size:11px;color:#000;letter-spacing:-0.078px;">Icon...</div>
<div class="a" style="left:1411.5px;top:313px;width:14px;height:13px;background:#fff;border:1px solid #333"></div>
<div class="t" style="left:1429.8px;top:312px;font-size:11px;color:#000;letter-spacing:-0.051px;">after/before</div>
<div class="t" style="left:975.7px;top:331px;font-size:11px;color:#000;letter-spacing:0.055px;">Column:</div>
<div class="t" style="left:1089.4px;top:331px;font-size:11px;color:#000;letter-spacing:-0.188px;">Span:</div>
<div class="a" style="left:1121px;top:328.5px;width:49.5px;height:14.0px;background:#fff;border:1px solid #b2b2b2;border-bottom-color:#a0a0a0;"></div>
<div class="t" style="left:1123px;top:331px;font-size:11px;color:#000;">4</div>
<div class="a" style="left:1172px;top:329px;width:14px;height:13px;background:#fff;border:1px solid #333"></div>
<div class="t" style="left:1190px;top:331px;font-size:11px;color:#000;letter-spacing:-0.039px;">Not Visible</div>
<div class="t" style="left:975.7px;top:345px;font-size:11px;color:#000;letter-spacing:-0.188px;">Row:</div>
<div class="t" style="left:1089.4px;top:345px;font-size:11px;color:#000;letter-spacing:-0.188px;">Span:</div>
<div class="a" style="left:1121px;top:342.5px;width:49.5px;height:14.5px;background:#fff;border:1px solid #b2b2b2;border-bottom-color:#a0a0a0;"></div>
<div class="t" style="left:1123px;top:345px;font-size:11px;color:#000;">1</div>
<div class="t" style="left:975.7px;top:362px;font-size:11px;color:#000;letter-spacing:-0.081px;">Is action:</div>
<div class="a" style="left:1087px;top:359.5px;width:14px;height:13px;background:#fff;border:1px solid #333"></div>
<svg class="a" style="left:1087px;top:359.5px" width="14" height="14"><path d="M2.8 6.8l2.6 3 5.6-7.2" fill="none" stroke="#111" stroke-width="1.8"/></svg>
<div class="a" style="left:1112px;top:358.5px;width:100px;height:17.5px;background:linear-gradient(#efefef,#e5e5e5);border:1px solid #adadad;border-bottom-color:#9a9a9a"></div>
<svg class="a" style="left:1197px;top:364.25px" width="9" height="6"><path d="M2 1l2.5 3.2 2.5-3.2" fill="none" stroke="#555" stroke-width="1"/></svg>
<div class="t" style="left:1117px;top:362px;font-size:11px;color:#000;letter-spacing:0.073px;">---AddACarIUs</div>
<div class="a" style="left:1211.5px;top:358.5px;width:13.0px;height:17.5px;background:#dedede;border:1px solid #6e6e6e"></div>
<div class="t" style="left:1214px;top:365px;font-size:10px;color:#000;">...</div>
<div class="t" style="left:1228px;top:362px;font-size:11px;color:#000;letter-spacing:-0.068px;">Interval:</div>
<div class="a" style="left:1275px;top:358.5px;width:30px;height:17.0px;background:#fff;border:1px solid #b2b2b2;border-bottom-color:#a0a0a0;"></div>
<div class="t" style="left:1278px;top:360px;font-size:11px;color:#000;">-1</div>
<div class="t" style="left:1627.3px;top:362px;font-size:11px;color:#000;letter-spacing:-0.032px;">Rendered by:</div>
<div class="a" style="left:1706.5px;top:358px;width:99.5px;height:18px;background:linear-gradient(#efefef,#e5e5e5);border:1px solid #adadad;border-bottom-color:#9a9a9a"></div>
<svg class="a" style="left:1791px;top:364.0px" width="9" height="6"><path d="M2 1l2.5 3.2 2.5-3.2" fill="none" stroke="#555" stroke-width="1"/></svg>
<div class="t" style="left:975.7px;top:380px;font-size:11px;color:#000;">Column for picklist:</div>
<div class="a" style="left:1086.5px;top:376.5px;width:125.5px;height:18.0px;background:linear-gradient(#efefef,#e5e5e5);border:1px solid #adadad;border-bottom-color:#9a9a9a"></div>
<svg class="a" style="left:1197px;top:382.5px" width="9" height="6"><path d="M2 1l2.5 3.2 2.5-3.2" fill="none" stroke="#555" stroke-width="1"/></svg>
<div class="t" style="left:1568.8px;top:380px;font-size:11px;color:#000;letter-spacing:-0.129px;">Null:</div>
<div class="a" style="left:1594px;top:376px;width:54px;height:19px;background:linear-gradient(#efefef,#e5e5e5);border:1px solid #adadad;border-bottom-color:#9a9a9a"></div>
<svg class="a" style="left:1633px;top:382.5px" width="9" height="6"><path d="M2 1l2.5 3.2 2.5-3.2" fill="none" stroke="#555" stroke-width="1"/></svg>
<div class="t" style="left:1599.7px;top:380px;font-size:11px;color:#000;letter-spacing:-0.166px;">None</div>
<div class="t" style="left:1651.3px;top:380px;font-size:11px;color:#000;letter-spacing:-0.127px;">NullRep:</div>
<div class="a" style="left:1706.5px;top:376px;width:99.5px;height:19px;background:#fff;border:1px solid #b2b2b2;border-bottom-color:#a0a0a0;"></div>
<div class="t" style="left:975.7px;top:401px;font-size:11px;color:#000;letter-spacing:-0.038px;">Is static:</div>
<div class="a" style="left:1087px;top:399.5px;width:14px;height:13px;background:#fff;border:1px solid #333"></div>
<div class="t" style="left:1117px;top:401px;font-size:11px;color:#000;letter-spacing:-0.053px;">Is Groupbox:</div>
<div class="a" style="left:1184.5px;top:399.5px;width:14px;height:13px;background:#fff;border:1px solid #333"></div>
<div class="t" style="left:1214px;top:401px;font-size:11px;color:#000;letter-spacing:-0.053px;">Include in Groupbox:</div>
<div class="a" style="left:1318.5px;top:395.5px;width:27.0px;height:21.5px;background:linear-gradient(#efefef,#e5e5e5);border:1px solid #adadad;border-bottom-color:#9a9a9a"></div>
<svg class="a" style="left:1330.5px;top:403.25px" width="9" height="6"><path d="M2 1l2.5 3.2 2.5-3.2" fill="none" stroke="#555" stroke-width="1"/></svg>
<div class="t" style="left:976.6px;top:420px;font-size:11px;color:#000;letter-spacing:-0.055px;">Disabled Expression</div>
<div class="a" style="left:1086.5px;top:417.5px;width:700.0px;height:16.0px;background:#fff;border:1px solid #b2b2b2;border-bottom-color:#a0a0a0;"></div>
<div class="a" style="left:1786px;top:417.5px;width:20px;height:15.5px;background:#dedede;border:1px solid #6e6e6e"></div>
<div class="t" style="left:1790px;top:423px;font-size:10px;color:#000;">...</div>
<div class="t" style="left:976.6px;top:438px;font-size:11px;color:#000;letter-spacing:-0.041px;">Visible Expression:</div>
<div class="a" style="left:1086.5px;top:434.5px;width:604.0px;height:17.5px;background:#fff;border:1px solid #b2b2b2;border-bottom-color:#a0a0a0;"></div>
<div class="a" style="left:1692px;top:436px;width:14px;height:13px;background:#fff;border:1px solid #333"></div>
<div class="t" style="left:1711.5px;top:434px;font-size:11px;color:#000;letter-spacing:-0.059px;">FollowEnable</div>
<div class="a" style="left:1786px;top:433.5px;width:20px;height:18.0px;background:#dedede;border:1px solid #6e6e6e"></div>
<div class="t" style="left:1790px;top:441px;font-size:10px;color:#000;">...</div>
<div class="t" style="left:976.6px;top:457px;font-size:11px;color:#000;letter-spacing:-0.112px;">Style ref:</div>
<div class="a" style="left:1086.5px;top:452px;width:484.5px;height:18.5px;background:#fff;border:1px solid #b2b2b2;border-bottom-color:#a0a0a0;"></div>
<div class="a" style="left:1572px;top:455px;width:14px;height:13px;background:#fff;border:1px solid #333"></div>
<div class="t" style="left:1591.1px;top:454px;font-size:11px;color:#000;letter-spacing:-0.079px;">IsExp</div>
<div class="a" style="left:1621px;top:452px;width:20px;height:18.5px;background:#ececec;border:1px solid #d0d0d0"></div>
<div class="t" style="left:1625px;top:460px;font-size:10px;color:#aaa;">...</div>
<div class="a" style="left:1641px;top:452.5px;width:52px;height:18.5px;background:#dcdcdc;border:1px solid #6e6e6e"></div>
<div class="t" style="left:1643.6px;top:457px;font-size:11px;color:#000;letter-spacing:-0.111px;">Pick Style</div>
<div class="a" style="left:1772px;top:452.5px;width:34px;height:18.5px;background:#dcdcdc;border:1px solid #6e6e6e"></div>
<div class="t" style="left:1774.3px;top:457px;font-size:11px;color:#000;letter-spacing:-0.154px;">Styles</div>
<div class="a" style="left:1116px;top:481px;width:29.5px;height:17.5px;background:#fff;border:1px solid #b2b2b2;border-bottom-color:#a0a0a0;"></div>
<div class="t" style="left:1119px;top:483px;font-size:11px;color:#000;">20</div>
<div class="t" style="left:976.6px;top:502px;font-size:11px;color:#000;letter-spacing:-0.113px;">Margins:</div>
<div class="a" style="left:1086.5px;top:499px;width:29.5px;height:18px;background:#fff;border:1px solid #b2b2b2;border-bottom-color:#a0a0a0;border-color:#3c8ce8"></div>
<div class="a" style="left:1146px;top:499px;width:29.5px;height:18px;background:#fff;border:1px solid #b2b2b2;border-bottom-color:#a0a0a0;"></div>
<div class="a" style="left:1116px;top:517.5px;width:29.5px;height:17.0px;background:#fff;border:1px solid #b2b2b2;border-bottom-color:#a0a0a0;"></div>
<div class="t" style="left:1206.6px;top:482px;font-size:11px;color:#000;letter-spacing:-0.031px;">Primary(X-Direction)min:</div>
<div class="a" style="left:1346px;top:481px;width:29.5px;height:17.5px;background:#fff;border:1px solid #b2b2b2;border-bottom-color:#a0a0a0;"></div>
<div class="t" style="left:1379.3px;top:482px;font-size:11px;color:#000;letter-spacing:-0.215px;">max:</div>
<div class="a" style="left:1406.5px;top:481px;width:29.5px;height:17.5px;background:#fff;border:1px solid #b2b2b2;border-bottom-color:#a0a0a0;"></div>
<div class="t" style="left:1438.9px;top:482px;font-size:11px;color:#000;letter-spacing:-0.037px;">grow(&gt;1 X-Direction):</div>
<div class="a" style="left:1543px;top:481px;width:29.5px;height:17.5px;background:#fff;border:1px solid #b2b2b2;border-bottom-color:#a0a0a0;"></div>
<div class="t" style="left:1206.6px;top:500px;font-size:11px;color:#000;">Secondary(Y-Direction)min:</div>
<div class="a" style="left:1347px;top:499px;width:29.5px;height:18px;background:#fff;border:1px solid #b2b2b2;border-bottom-color:#a0a0a0;"></div>
<div class="t" style="left:1379.3px;top:500px;font-size:11px;color:#000;letter-spacing:-0.215px;">max:</div>
<div class="a" style="left:1407px;top:499px;width:29.5px;height:18px;background:#fff;border:1px solid #b2b2b2;border-bottom-color:#a0a0a0;"></div>
<div class="t" style="left:1206.6px;top:521px;font-size:11px;color:#000;">Self-Align(Y-Direction):</div>
<div class="a" style="left:1318px;top:517.5px;width:70px;height:17.5px;background:linear-gradient(#efefef,#e5e5e5);border:1px solid #adadad;border-bottom-color:#9a9a9a"></div>
<svg class="a" style="left:1373px;top:523.25px" width="9" height="6"><path d="M2 1l2.5 3.2 2.5-3.2" fill="none" stroke="#555" stroke-width="1"/></svg>
<div class="t" style="left:1324.7px;top:521px;font-size:11px;color:#000;letter-spacing:-0.108px;">NotSet</div>
<div class="t" style="left:1393.5px;top:521px;font-size:11px;color:#000;letter-spacing:-0.080px;">Override Parent:</div>
<div class="t" style="left:1483.9px;top:521px;font-size:11px;color:#000;letter-spacing:-0.108px;">NotSet</div>
<div class="a" style="left:1075px;top:575px;width:591px;height:115px;background:#d3d3d3"></div>
<div class="a" style="left:1663px;top:690px;width:3px;height:302px;background:#dadada"></div>
<div class="a" style="left:1075.5px;top:578.5px;width:147px;height:51px;background:#fff;border:1px solid #c4c4c4;border-radius:2px"></div>
<div class="a" style="left:1076px;top:620.5px;width:145px;height:1.5px;background:#555"></div>
<div class="t" style="left:1080.6px;top:581px;font-size:9.5px;color:#9a9a9a;letter-spacing:0.237px;">Current Car</div>
<svg class="a" style="left:1213px;top:609px" width="9" height="6"><path d="M0.5 0.5h7.5l-3.75 4z" fill="#666"/></svg>
<div class="a" style="left:1228px;top:597px;width:194px;height:32px;background:#3465aa;border-radius:3px;box-shadow:0 1px 3px rgba(0,0,0,.35)"></div>
<div class="t" style="left:1244.8px;top:608px;font-size:13.5px;color:#fff;letter-spacing:0.353px;-webkit-text-stroke:.25px #fff;">Add A Car I Used To Own</div>
<div class="a" style="left:1428px;top:597px;width:144px;height:32px;background:#3465aa;border-radius:3px;box-shadow:0 1px 3px rgba(0,0,0,.35)"></div>
<div class="t" style="left:1469.2px;top:608px;font-size:13.5px;color:#fff;letter-spacing:0.209px;-webkit-text-stroke:.25px #fff;">Delete Me</div>
<div class="a" style="left:1075.5px;top:633.5px;width:147px;height:30.5px;background:#fff;border:1px solid #c8c8c8;border-bottom:2px solid #8a8a8a"></div>
<div class="t" style="left:1080.6px;top:636px;font-size:9.5px;color:#9a9a9a;letter-spacing:0.297px;">Age (Years)</div>
<div class="a" style="left:1225.5px;top:633.5px;width:96.5px;height:30.5px;background:#fff;border:1px solid #c8c8c8;border-bottom:2px solid #8a8a8a"></div>
<div class="t" style="left:1230.6px;top:636px;font-size:9.5px;color:#9a9a9a;letter-spacing:0.352px;">Name</div>
<div class="a" style="left:1328px;top:632px;width:194px;height:32px;background:#3465aa;border-radius:3px;box-shadow:0 1px 3px rgba(0,0,0,.35)"></div>
<div class="t" style="left:1410px;top:643px;font-size:13.5px;color:#fff;letter-spacing:0.273px;-webkit-text-stroke:.25px #fff;">Save</div>
<div class="t" style="left:1086px;top:669px;font-size:15.7px;color:#000;letter-spacing:0.121px;">Historic Ownership</div>
<div class="a" style="left:1075px;top:689.5px;width:589px;height:303px;background:#fff;border:1px solid #a8a8a8;border-radius:4px"></div>
<div class="a" style="left:1076px;top:714px;width:587px;height:1px;background:#b8b8b8"></div>
<div class="a" style="left:1080.8px;top:690px;width:26px;height:24px;overflow:hidden">
<div class="t" style="left:0;top:0.68px;font-size:10.3px;color:#555">Date</div>
<div class="t" style="left:0;top:12.88px;font-size:10.3px;color:#555">Purch</div>
</div>
<svg class="a" style="left:1104.8px;top:697px" width="9" height="10"><path d="M0.5 0.5h8l-3 4v5l-2-1v-4z" fill="#eaeaea"/></svg>
<div class="a" style="left:1125.6px;top:690px;width:30px;height:24px;overflow:hidden">
<div class="t" style="left:0;top:0.68px;font-size:10.3px;color:#555">Date</div>
<div class="t" style="left:0;top:12.88px;font-size:10.3px;color:#555">Sold</div>
</div>
<svg class="a" style="left:1149.6px;top:697px" width="9" height="10"><path d="M0.5 0.5h8l-3 4v5l-2-1v-4z" fill="#eaeaea"/></svg>
<div class="a" style="left:1171px;top:690px;width:26px;height:24px;overflow:hidden">
<div class="t" style="left:0;top:0.68px;font-size:10.3px;color:#555">Regis</div>
<div class="t" style="left:0;top:12.88px;font-size:10.3px;color:#555">Numb</div>
</div>
<svg class="a" style="left:1195px;top:697px" width="9" height="10"><path d="M0.5 0.5h8l-3 4v5l-2-1v-4z" fill="#eaeaea"/></svg>
<svg class="a" style="left:1636px;top:694px" width="24" height="8"><circle cx="4.3" cy="3.8" r="2.4" fill="#2f62ae"/><circle cx="10.8" cy="3.8" r="2.4" fill="#2f62ae"/><circle cx="17.3" cy="3.8" r="2.4" fill="#2f62ae"/></svg>
<div class="a" style="left:1775px;top:541px;width:35px;height:350px;background:#dfdfdf;border:1px solid #c8c8c8"></div>
<div class="a" style="left:1775px;top:576px;width:35px;height:1px;background:#c4c4c4"></div>
<div class="a" style="left:1775px;top:611px;width:35px;height:1px;background:#c4c4c4"></div>
<div class="a" style="left:1775px;top:646px;width:35px;height:1px;background:#c4c4c4"></div>
<div class="a" style="left:1775px;top:681px;width:35px;height:1px;background:#c4c4c4"></div>
<div class="a" style="left:1775px;top:716px;width:35px;height:1px;background:#c4c4c4"></div>
<div class="a" style="left:1775px;top:751px;width:35px;height:1px;background:#c4c4c4"></div>
<div class="a" style="left:1775px;top:786px;width:35px;height:1px;background:#c4c4c4"></div>
<div class="a" style="left:1775px;top:821px;width:35px;height:1px;background:#c4c4c4"></div>
<div class="a" style="left:1775px;top:856px;width:35px;height:1px;background:#c4c4c4"></div>
<svg class="a" style="left:1783px;top:549px" width="19" height="19" viewBox="0 0 18 18"><rect x="1.5" y="4.5" width="12" height="11" fill="none" stroke="#111" stroke-width="1.8"/><path d="M5.5 12.5l1-3.5 7.5-7.5 2.5 2.5-7.5 7.5z" fill="#111"/><path d="M6.5 9.5l2.5 2.5" stroke="#dfdfdf" stroke-width=".8"/></svg>
<svg class="a" style="left:1783px;top:584px" width="19" height="19" viewBox="0 0 18 18"><path d="M1.5 1.5h15v4h-1.5l-.5-2h-4.5v11.5l2 .5v1.5h-6v-1.5l2-.5v-11.5h-4.5l-.5 2h-1.5z" fill="#111"/></svg>
<svg class="a" style="left:1783px;top:619px" width="19" height="19" viewBox="0 0 18 18"><rect x="3.5" y="5.5" width="10" height="9" fill="none" stroke="#111" stroke-width="1.6"/><path d="M5.5 9l3 3 6-7" fill="none" stroke="#111" stroke-width="2"/></svg>
<svg class="a" style="left:1783px;top:654px" width="19" height="19" viewBox="0 0 18 18"><rect x="0.5" y="4.5" width="11" height="9" fill="none" stroke="#111" stroke-width="1.5"/><path d="M0.5 7.5h11M0.5 10.5h11" stroke="#111" stroke-width="1.2"/><path d="M16 3v10M13 10l3 3.5 3-3.5" fill="none" stroke="#111" stroke-width="1.8"/></svg>
<svg class="a" style="left:1783px;top:689px" width="19" height="19" viewBox="0 0 18 18"><rect x="1" y="3" width="16" height="14" fill="#111"/><rect x="3" y="7" width="12" height="8" fill="#dfdfdf"/><path d="M3 9h12M3 11h12M3 13h12M6 7v8M9 7v8M12 7v8" stroke="#111" stroke-width="1"/><rect x="4" y="1" width="2" height="4" fill="#111"/><rect x="12" y="1" width="2" height="4" fill="#111"/></svg>
<svg class="a" style="left:1783px;top:724px" width="19" height="19" viewBox="0 0 18 18"><rect x="0.8" y="2.3" width="16.2" height="13.6" fill="none" stroke="#111" stroke-width="1.7"/><path d="M5.8 4.5l1.6 1.6 1.6-1.6 1.6 1.6 1.6-1.6v3.2q-3.2 2.2-6.4 0z" fill="#111"/><path d="M8.6 8.5h.8v4h-.8z" fill="#111"/><path d="M4.5 9.5q2.5 1 4.5 3.5q2-2.5 4.5-3.5v4.5h-9z" fill="#111"/></svg>
<svg class="a" style="left:1783px;top:759px" width="19" height="19" viewBox="0 0 18 18"><rect x="0.8" y="4.8" width="16.5" height="8.5" rx="3" fill="none" stroke="#111" stroke-width="1.5"/><text x="9" y="11.5" font-size="6" font-weight="bold" text-anchor="middle" font-family="Liberation Sans" fill="#111">btn</text></svg>
<svg class="a" style="left:1783px;top:794px" width="19" height="19" viewBox="0 0 18 18"><rect x="1.5" y="1.5" width="15" height="15" fill="none" stroke="#111" stroke-width="1.3"/><text x="3" y="7.5" font-size="6" font-weight="bold" font-family="Liberation Sans" fill="#111">list</text><path d="M2 10h14M2 12h14M2 14h14" stroke="#111" stroke-width="1"/></svg>
<svg class="a" style="left:1783px;top:829px" width="19" height="19" viewBox="0 0 18 18"><path d="M9 2.3L14.2 5.3L9 8.3L3.8 5.3Z" fill="#111"/><path d="M3.8 5.9L8.6 8.8V15.6L3.8 12.7Z" fill="#4a4a4a"/><path d="M9.4 8.8L14.2 5.9V12.7L9.4 15.6Z" fill="#7a7a7a"/><path d="M2.6 3.8q-2.3 5.2 0 10.4M15.4 3.8q2.3 5.2 0 10.4" fill="none" stroke="#111" stroke-width="1.3"/></svg>
<svg class="a" style="left:1782px;top:863px" width="22" height="23" viewBox="0 0 22 23"><rect x="0.8" y="0.8" width="20.4" height="17" rx="1.5" fill="none" stroke="#111" stroke-width="1.3"/><path d="M3 3.3h5M13 3.3h1M15.5 3.3h1M18 3.3h1" stroke="#111" stroke-width="1"/><rect x="4" y="7" width="14" height="15.2" rx="1" fill="#fff" stroke="#111" stroke-width="1.6"/><path d="M6.2 11v-2h2M13.8 9h2v2M15.8 18v2h-2M8.2 20h-2v-2" fill="none" stroke="#111" stroke-width="1"/><path d="M6.5 14.5q4.5-4.2 9 0q-4.5 4.2-9 0z" fill="none" stroke="#111" stroke-width="1.2"/><circle cx="11" cy="14.5" r="1.3" fill="#111"/></svg>
<div class="a" style="left:971px;top:1031px;width:14px;height:13px;background:#fff;border:1px solid #333"></div>
<div class="t" style="left:990.4px;top:1030px;font-size:11px;color:#000;letter-spacing:-0.071px;">Show tab-order</div>
<div class="a" style="left:1068px;top:1026.5px;width:16px;height:22.0px;background:#dadada;border:1px solid #6e6e6e"></div>
<div class="t" style="left:1069.5px;top:1031px;font-size:12px;color:#000;letter-spacing:-0.422px;">Fit</div>
<div class="t" style="left:1094.2px;top:1032px;font-size:11px;color:#000;letter-spacing:-0.158px;">Width:</div>
<div class="a" style="left:1133px;top:1036px;width:90px;height:4px;background:#e4e4e4;border:1px solid #d6d6d6"></div>
<div class="a" style="left:1135px;top:1029px;width:11px;height:18px;background:#f0f0f0;border:1px solid #a8a8a8"></div>
<div class="t" style="left:1238.6px;top:1032px;font-size:11px;color:#000;letter-spacing:-0.093px;">Height:</div>
<div class="a" style="left:1281px;top:1036px;width:90px;height:4px;background:#e4e4e4;border:1px solid #d6d6d6"></div>
<div class="a" style="left:1281px;top:1029px;width:11px;height:18px;background:#f0f0f0;border:1px solid #a8a8a8"></div>
<div class="t" style="left:1386.3px;top:1032px;font-size:11px;color:#000;letter-spacing:-0.058px;">x:591 y:418</div>
<div class="t" style="left:969.8px;top:1054px;font-size:8px;color:#000;-webkit-text-stroke:.15px #000;">Screen size marker</div>
<div class="a" style="left:1039px;top:1052.5px;width:19px;height:11.5px;background:#fff;border:1px solid #b2b2b2;border-bottom-color:#a0a0a0;"></div>
<div class="t" style="left:1042px;top:1055px;font-size:8px;color:#000;-webkit-text-stroke:.15px #000;">758</div>
<div class="t" style="left:1058.5px;top:1054px;font-size:8px;color:#000;">X</div>
<div class="a" style="left:1063.5px;top:1052.5px;width:19.0px;height:11.5px;background:#fff;border:1px solid #b2b2b2;border-bottom-color:#a0a0a0;"></div>
<div class="t" style="left:1066px;top:1055px;font-size:8px;color:#000;-webkit-text-stroke:.15px #000;">600</div>
<div class="t" style="left:1083.2px;top:1054px;font-size:8px;color:#000;letter-spacing:-0.075px;-webkit-text-stroke:.15px #000;">SuggestedZoom</div>
<div class="a" style="left:1142px;top:1052.5px;width:30px;height:11.5px;background:#fff;border:1px solid #b2b2b2;border-bottom-color:#a0a0a0;"></div>
<div class="a" style="left:1172px;top:1049.5px;width:78px;height:17.0px;background:#dcdcdc;border:1px solid #6e6e6e"></div>
<div class="t" style="left:1174px;top:1055px;font-size:8px;color:#000;letter-spacing:-0.033px;-webkit-text-stroke:.15px #000;">Set shrink zoom to fit</div>
<div class="a" style="left:1260px;top:1049px;width:149px;height:17.5px;background:#e1e1e1;border:1px solid #6e6e6e"></div>
<div class="t" style="left:1262px;top:1053px;font-size:11px;color:#000;">WebApp Prototype Edit-Mode</div>
<svg class="a" style="left:990px;top:490px" width="320" height="340" viewBox="990 490 320 340">
<defs><filter id="sh" x="-30%" y="-30%" width="160%" height="160%"><feDropShadow dx="2" dy="2" stdDeviation="2" flood-color="#000" flood-opacity=".3"/></filter>
<radialGradient id="cg" cx=".45" cy=".4" r=".6"><stop offset="0" stop-color="#48b8e6"/><stop offset="1" stop-color="#2a9fd6"/></radialGradient></defs>
<g filter="url(#sh)">
<path d="M1036.8 584.3 L1095.5 513.5 L1089.1 510.7 L1115.3 499.1 L1106.8 525.9 L1103.5 520.5 Z" fill="#0ab2ec"/>
<path d="M1255.6 767 L1273.5 645.8 L1265.6 647.4 L1282 623.7 L1289.3 651 L1283.5 647.2 Z" fill="#0ab2ec"/>
<circle cx="1016.5" cy="609.8" r="14" fill="url(#cg)" stroke="#5cc4ee" stroke-width="1.2"/>
<circle cx="1252.5" cy="798.9" r="14" fill="url(#cg)" stroke="#5cc4ee" stroke-width="1.2"/>
</g>
<text x="1016.5" y="615.5" font-family="Liberation Sans" font-size="15" fill="#fff" text-anchor="middle">2</text>
<text x="1252.5" y="804.6" font-family="Liberation Sans" font-size="15" fill="#fff" text-anchor="middle">1</text>
</svg>
</body></html>
